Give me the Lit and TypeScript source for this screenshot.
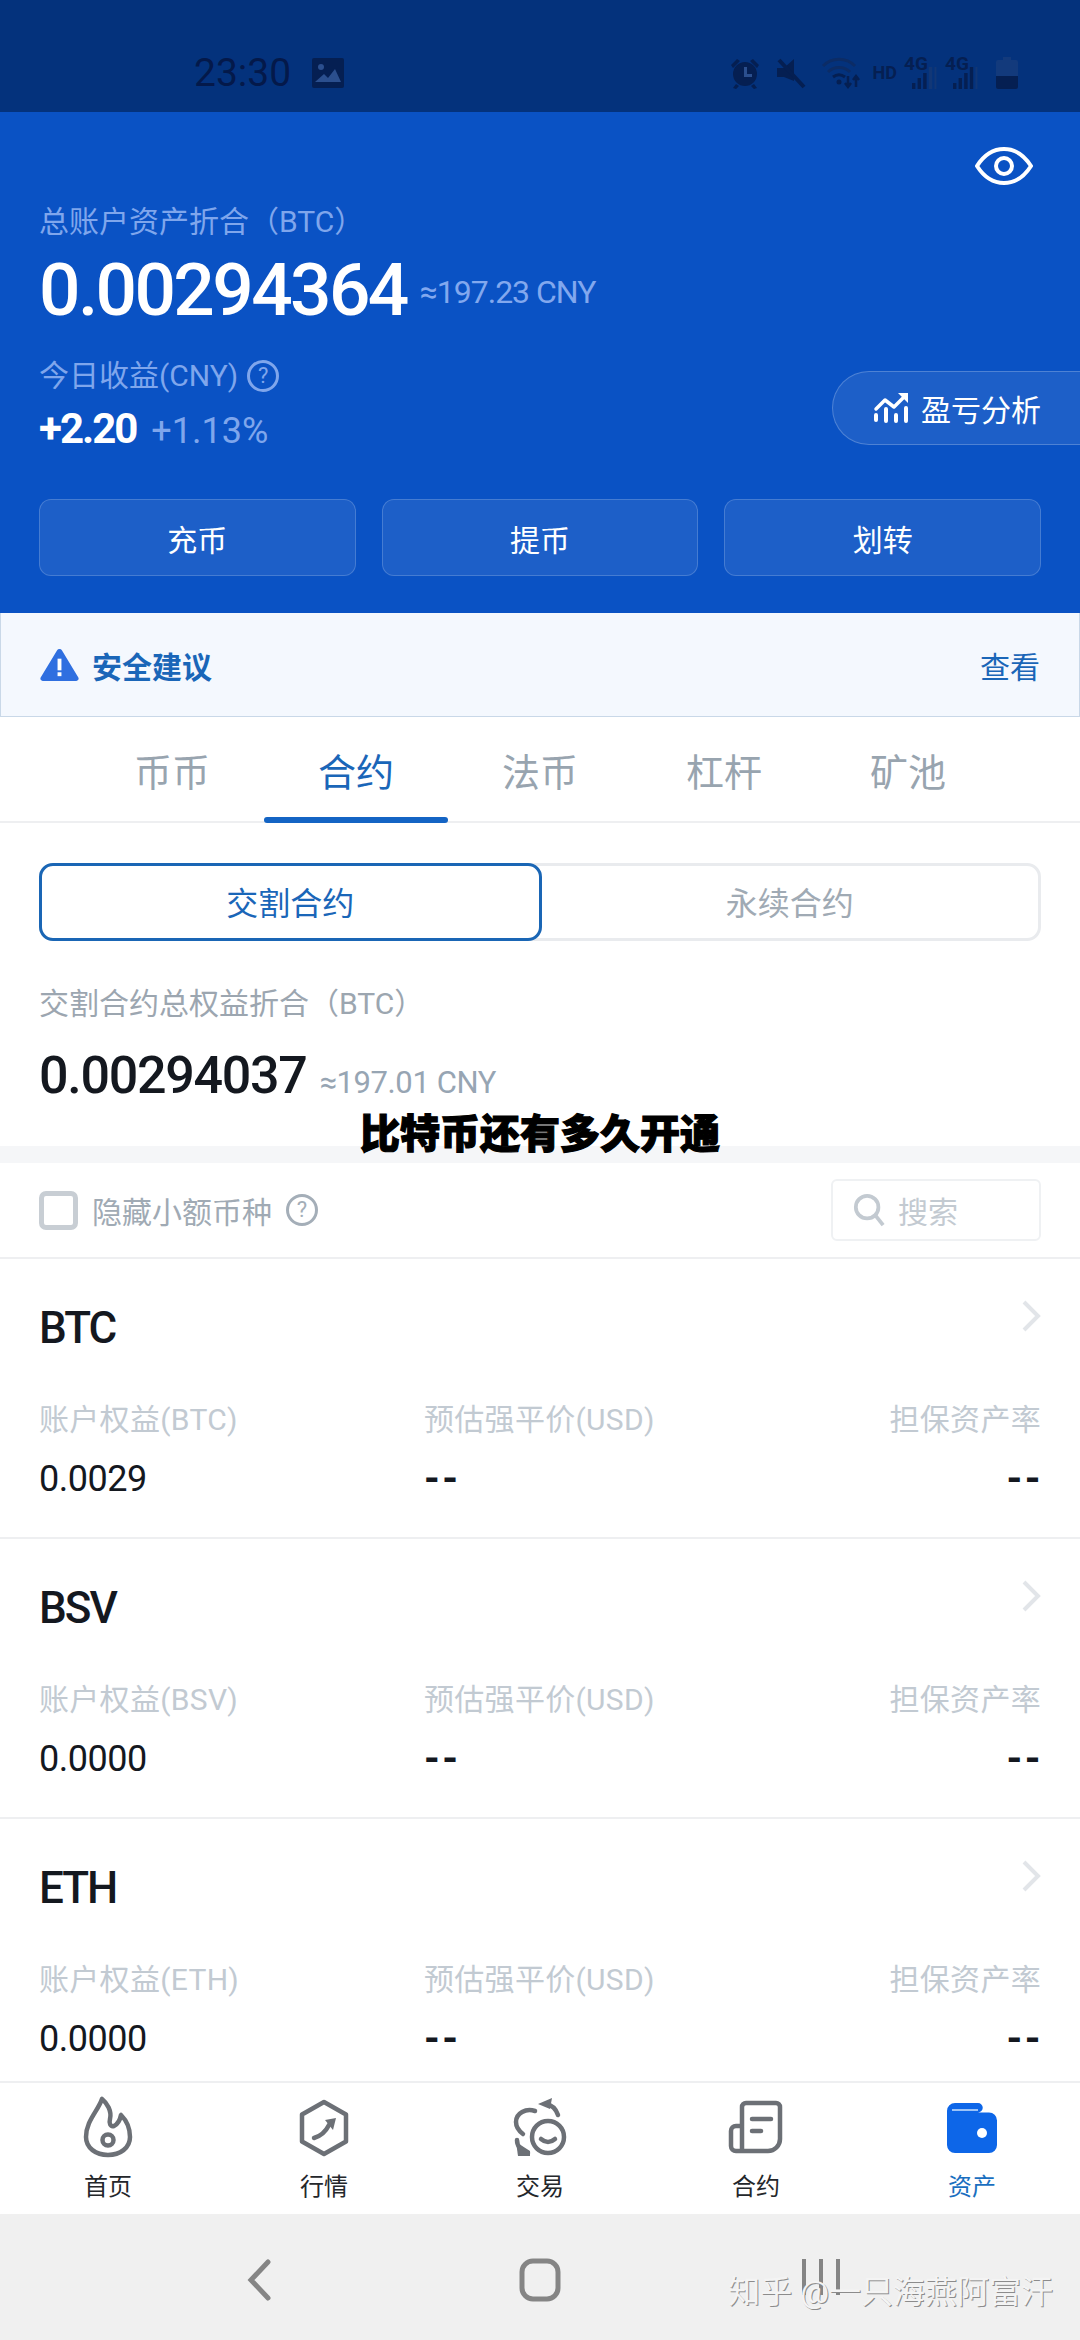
import { css, html, LitElement, svg } from "lit";
import { customElement } from "lit/decorators.js";

const TABS = ["币币", "合约", "法币", "杠杆", "矿池"];

const COINS = ["BTC", "BSV", "ETH"];
const COIN_VALUES: Record<string, string> = {
  BTC: "0.0029",
  BSV: "0.0000",
  ETH: "0.0000",
};

const NAV_ICONS = [
  svg`<path d="M26 6C22 18 10 28 10 44C10 55 20 62 32 62C44 62 54 55 54 44C54 34 50 27 45 22C44 27 42 31 38 33C34 34 33 30 34 26C36 18 31 10 26 6Z" stroke-linejoin="round" /><circle cx="32" cy="47" r="5.5" />`,
  svg`<path d="M32 9L54 21.5V48.5L32 61L10 48.5V21.5Z" stroke-linejoin="round" /><path d="M22 45C29 43 34 38 37 32" /><path d="M44 25L33 27L41 37Z" fill="#6c7076" stroke="none" />`,
  svg`<circle cx="40" cy="44" r="16" /><path d="M33 46Q40 52 47 46" /><path d="M27 18C18 15 8 20 8 29C8 34 11 38 15 41" /><path d="M38 11C44 12 48 16 50 22" /><path d="M30 11L44 5L42 16Z" fill="#6c7076" stroke="none" /><path d="M9 47C9 53 13 58 20 60" /><path d="M8 49L22 58L22 63L10 63Z" fill="#6c7076" stroke="none" />`,
  svg`<path d="M18 57V14a4 4 0 0 1 4-4H52a4 4 0 0 1 4 4V46a12 12 0 0 1-12 12H12a5 5 0 0 1-5-5V38a5 5 0 0 1 5-5h6" stroke-linejoin="round" /><path d="M28 26H47" /><path d="M28 38H37" />`,
];

@customElement("app-root")
export class AppRoot extends LitElement {
  private renderCoin(coin: string) {
    return html`
      <div class="coin">
        <div class="coin-head">
          <span class="coin-name">${coin}</span>
          <svg class="chev" viewBox="0 0 20 32" width="20" height="32">
            <path d="M3 2l14 14L3 30" />
          </svg>
        </div>
        <div class="coin-grid labels">
          <span>账户权益(${coin})</span>
          <span>预估强平价(USD)</span>
          <span class="end">担保资产率</span>
        </div>
        <div class="coin-grid values">
          <span>${COIN_VALUES[coin]}</span>
          <span class="dash">--</span>
          <span class="end dash">--</span>
        </div>
      </div>
    `;
  }

  private renderNet(strong: number) {
    const heights = [6, 11, 16, 22, 22];
    return html`
      <span class="net">
        <span class="net-label">4G</span>
        <svg viewBox="0 0 28 22" width="28" height="22">
          ${heights.map(
            (h, i) => svg`<rect x=${i * 5.6} y=${22 - h} width=${i === 4 ? 2 : 3.4} height=${h} fill=${i < strong ? "#051f52" : "#123776"} />`,
          )}
        </svg>
      </span>
    `;
  }

  protected render() {
    return html`
      <div class="status">
        <div class="status-left">
          <span class="time">23:30</span>
          <svg viewBox="0 0 32 30" width="32" height="30">
            <rect width="32" height="30" rx="2" fill="#051f52" />
            <circle cx="9" cy="9" r="3" fill="#2b4f8e" />
            <path d="M3 24l9-8 4 4 7-9 6 13z" fill="#2b4f8e" />
          </svg>
        </div>
        <div class="status-right">
          <svg viewBox="0 0 32 32" width="32" height="32" fill="#051f52">
            <circle cx="16" cy="17" r="12" />
            <path d="M2 8l6-6 3 2-7 7zM30 8l-6-6-3 2 7 7zM7 27l-3 4 3 1 3-3zM25 27l3 4-3 1-3-3z" />
            <path d="M15 10h3v7h5v3h-8z" fill="#2b4f8e" />
          </svg>
          <svg viewBox="0 0 30 32" width="30" height="32" fill="#051f52">
            <path d="M1 11h7l10-9v22L8 20H1z" />
            <path d="M3 3l25 27" stroke="#051f52" stroke-width="4" />
          </svg>
          <svg viewBox="0 0 40 34" width="40" height="34" fill="none" stroke="#0c2c66" stroke-width="3">
            <path d="M2 10c9-9 23-9 32 0M7 16c6-6 16-6 22 0" />
            <path d="M12 21c4-3 8-3 12 0" stroke="#051f52" />
            <circle cx="18" cy="26" r="2.5" fill="#051f52" stroke="none" />
            <path d="M27 20v11M24 27l3 4 3-4M35 31V20M32 24l3-4 3 4" stroke="#051f52" stroke-width="2.5" />
          </svg>
          <span class="hd">HD</span>
          ${this.renderNet(3)} ${this.renderNet(4)}
          <svg viewBox="0 0 22 32" width="22" height="32">
            <path d="M7 0h8v3h5a2 2 0 0 1 2 2v25a2 2 0 0 1-2 2H2a2 2 0 0 1-2-2V5a2 2 0 0 1 2-2h5z" fill="#133a7c" />
            <path d="M0 19h22v11a2 2 0 0 1-2 2H2a2 2 0 0 1-2-2z" fill="#051f52" />
          </svg>
        </div>
      </div>

      <div class="hero">
        <div class="eye-row">
          <svg viewBox="0 0 58 38" width="58" height="38" fill="none" stroke="#fff" stroke-width="4">
            <path d="M2 19C9 8 18 2 29 2s20 6 27 17c-7 11-16 17-27 17S9 30 2 19z" />
            <circle cx="29" cy="19" r="8" />
          </svg>
        </div>
        <div class="hero-label">总账户资产折合（BTC）</div>
        <div class="hero-total">
          <span class="hero-num">0.00294364</span>
          <span class="hero-cny">≈197.23 CNY</span>
        </div>
        <div class="hero-mid">
          <div>
            <div class="today">
              <span>今日收益(CNY)</span>
              <span class="qmark light">?</span>
            </div>
            <div class="profit">
              <span class="profit-num">+2.20</span>
              <span class="profit-pct">+1.13%</span>
            </div>
          </div>
          <div class="pnl">
            <svg viewBox="0 0 36 32" width="36" height="32" fill="none" stroke="#fff" stroke-width="3.5" stroke-linecap="round">
              <path d="M3 17L12 8L21 15L31 5" stroke-linejoin="round" />
              <path d="M25 1H35V11Z" fill="#fff" stroke="none" />
              <path d="M3 23V28M13 17V29M23 23V29M33 16V29" stroke-width="4" />
            </svg>
            <span>盈亏分析</span>
          </div>
        </div>
        <div class="actions">
          <div class="action">充币</div>
          <div class="action">提币</div>
          <div class="action">划转</div>
        </div>
      </div>

      <div class="banner">
        <div class="banner-left">
          <svg viewBox="0 0 40 34" width="39" height="33">
            <path d="M20 1a3 3 0 0 1 2.6 1.5l16.8 28A2.4 2.4 0 0 1 37.3 34H2.7a2.4 2.4 0 0 1-2.1-3.5l16.8-28A3 3 0 0 1 20 1z" fill="#2f6fe0" />
            <rect x="18" y="11" width="4" height="12" fill="#fff" />
            <rect x="18" y="25" width="4" height="4" fill="#fff" />
          </svg>
          <span>安全建议</span>
        </div>
        <span class="banner-link">查看</span>
      </div>

      <div class="tabs">
        ${TABS.map(
          (t, i) => html`<div class="tab ${i === 1 ? "active" : ""}">${t}</div>`,
        )}
      </div>

      <div class="contract">
        <div class="segment">
          <div class="seg active">交割合约</div>
          <div class="seg">永续合约</div>
        </div>
        <div class="contract-label">交割合约总权益折合（BTC）</div>
        <div class="contract-total">
          <span class="contract-num">0.00294037</span>
          <span class="contract-cny">≈197.01 CNY</span>
        </div>
      </div>

      <div class="gap"></div>

      <div class="filter">
        <div class="filter-left">
          <span class="check"></span>
          <span>隐藏小额币种</span>
          <span class="qmark grey">?</span>
        </div>
        <div class="search">
          <svg viewBox="0 0 34 36" width="32" height="34" fill="none" stroke="#c3cad1" stroke-width="4">
            <circle cx="15" cy="15" r="12" />
            <path d="M24 24l8 10" />
          </svg>
          <span>搜索</span>
        </div>
      </div>

      <div class="list">${COINS.map((c) => this.renderCoin(c))}</div>

      <div class="nav">
        ${["首页", "行情", "交易", "合约"].map(
          (label, i) => html`
            <div class="nav-item">
              <svg viewBox="0 0 64 68" width="64" height="68" fill="none" stroke="#6c7076" stroke-width="4.5" stroke-linecap="round">
                ${NAV_ICONS[i]}
              </svg>
              <span>${label}</span>
            </div>
          `,
        )}
        <div class="nav-item active">
          <svg viewBox="0 0 64 68" width="64" height="68">
            <path d="M15 10H38a4.5 4.5 0 0 1 0 9.5H49a8 8 0 0 1 8 8V52a8 8 0 0 1-8 8H15a8 8 0 0 1-8-8V18a8 8 0 0 1 8-8z" fill="#0d66e8" />
            <path d="M12 17H38" stroke="#9cc3f7" stroke-width="2" />
            <circle cx="42" cy="40" r="5" fill="#fff" />
          </svg>
          <span>资产</span>
        </div>
      </div>

      <div class="sysnav">
        <svg viewBox="0 0 26 42" width="26" height="42" fill="none" stroke="#858585" stroke-width="5" stroke-linecap="round">
          <path d="M22 3L5 21l17 18" />
        </svg>
        <svg viewBox="0 0 42 44" width="42" height="44" fill="none" stroke="#858585" stroke-width="5">
          <rect x="3" y="3" width="36" height="38" rx="11" />
        </svg>
        <svg class="recents" viewBox="0 0 40 36" width="40" height="36" fill="none" stroke="#858585" stroke-width="4">
          <path d="M3 0v36M20 0v36M37 0v36" />
        </svg>
      </div>

      <div class="caption">比特币还有多久开通</div>
      <div class="watermark">知乎 @一只海燕阿富汗</div>
    `;
  }

  static styles = css`
    :host {
      display: block;
      position: relative;
      width: 1080px;
      height: 2340px;
      overflow: hidden;
      background: #fff;
      font-family: "Roboto", "Noto Sans CJK SC", sans-serif;
    }

    .status {
      height: 112px;
      box-sizing: border-box;
      padding: 53px 62px 0 194px;
      background: #04327c;
      display: flex;
      justify-content: space-between;
      align-items: flex-start;
    }

    .status-left {
      display: flex;
      align-items: center;
      gap: 21px;
      height: 40px;
    }

    .time {
      font-size: 39px;
      line-height: 40px;
      font-weight: 400;
      color: #04194a;
    }

    .status-right {
      display: flex;
      align-items: center;
      gap: 15px;
      height: 40px;
    }

    .hd {
      margin-left: -3px;
      font-size: 18px;
      font-weight: 700;
      color: #051f52;
      line-height: 26px;
    }

    .net {
      position: relative;
      display: block;
      width: 36px;
      height: 32px;
      margin-left: -8px;
    }

    .net + .net {
      margin-left: -10px;
    }

    .net svg {
      position: absolute;
      right: 0;
      bottom: 0;
    }

    .net-label {
      position: absolute;
      left: 0;
      top: -3px;
      font-size: 19px;
      line-height: 20px;
      font-weight: 700;
      color: #051f52;
    }

    .hero {
      height: 501px;
      box-sizing: border-box;
      background: #0a52c4;
      padding: 35px 39px 0;
      color: #fff;
    }

    .eye-row {
      display: flex;
      justify-content: flex-end;
      height: 38px;
      margin-right: 8px;
    }

    .hero-label {
      margin-top: 17px;
      font-size: 30px;
      line-height: 40px;
      color: #7fa6ec;
    }

    .hero-total {
      display: flex;
      align-items: center;
      gap: 13px;
      margin-top: 10px;
      height: 76px;
    }

    .hero-num {
      font-size: 73px;
      line-height: 76px;
      font-weight: 500;
      letter-spacing: -2.6px;
    }

    .hero-cny {
      margin-top: 4px;
      font-size: 32px;
      letter-spacing: -1px;
      color: #82a8ee;
    }

    .hero-mid {
      display: flex;
      justify-content: space-between;
      align-items: center;
      margin: 28px -39px 0 0;
    }

    .today {
      display: flex;
      align-items: center;
      gap: 9px;
      font-size: 30px;
      line-height: 40px;
      color: #7fa6ec;
    }

    .qmark {
      width: 32px;
      height: 32px;
      box-sizing: border-box;
      border: 3px solid;
      border-radius: 50%;
      font-size: 22px;
      line-height: 26px;
      text-align: center;
    }

    .qmark.light {
      color: #7fa6ec;
    }

    .qmark.grey {
      color: #a4aeb8;
    }

    .profit {
      display: flex;
      align-items: baseline;
      gap: 15px;
      margin-top: 10px;
    }

    .profit-num {
      font-size: 42px;
      line-height: 46px;
      font-weight: 700;
      letter-spacing: -2px;
    }

    .profit-pct {
      font-size: 36px;
      color: #7fa6ec;
    }

    .pnl {
      width: 248px;
      height: 74px;
      box-sizing: border-box;
      margin-top: 8px;
      display: flex;
      align-items: center;
      gap: 12px;
      padding-left: 40px;
      border: 1px solid rgba(255, 255, 255, 0.22);
      border-right: 0;
      border-radius: 37px 0 0 37px;
      background: rgba(255, 255, 255, 0.08);
      font-size: 30px;
    }

    .actions {
      display: grid;
      grid-template-columns: repeat(3, 1fr);
      gap: 26px;
      margin-top: 47px;
    }

    .action {
      height: 77px;
      box-sizing: border-box;
      display: flex;
      align-items: center;
      justify-content: center;
      border: 1px solid rgba(255, 255, 255, 0.18);
      border-radius: 12px;
      background: rgba(255, 255, 255, 0.08);
      font-size: 30px;
    }

    .banner {
      height: 104px;
      box-sizing: border-box;
      display: flex;
      justify-content: space-between;
      align-items: center;
      padding: 0 39px;
      background: #f4f8fe;
      border: 1px solid #c9d8e8;
      border-top: 0;
    }

    .banner-left {
      display: flex;
      align-items: center;
      gap: 13px;
      font-size: 30px;
      font-weight: 700;
      color: #1a66b8;
    }

    .banner-link {
      font-size: 30px;
      color: #1a66b8;
    }

    .tabs {
      height: 106px;
      box-sizing: border-box;
      display: flex;
      padding: 0 80px;
      border-bottom: 2px solid #eeeff1;
    }

    .tab {
      position: relative;
      width: 184px;
      display: flex;
      align-items: center;
      justify-content: center;
      font-size: 38px;
      color: #98a4af;
    }

    .tab.active {
      color: #1a66b8;
    }

    .tab.active::after {
      content: "";
      position: absolute;
      left: 0;
      right: 0;
      bottom: -2px;
      height: 6px;
      border-radius: 3px;
      background: #1464c4;
    }

    .contract {
      height: 323px;
      box-sizing: border-box;
      padding: 40px 39px 0;
    }

    .segment {
      display: flex;
      height: 78px;
      box-sizing: border-box;
      border: 3px solid #e9ebee;
      border-radius: 14px;
    }

    .seg {
      flex: 1;
      display: flex;
      align-items: center;
      justify-content: center;
      font-size: 32px;
      padding-bottom: 2px;
      color: #a0aab4;
    }

    .seg.active {
      margin: -3px 0 -3px -3px;
      border: 3px solid #1a66b5;
      border-radius: 14px;
      color: #1a66b8;
    }

    .contract-label {
      margin-top: 43px;
      font-size: 30px;
      line-height: 40px;
      color: #9ca6b0;
    }

    .contract-total {
      display: flex;
      align-items: baseline;
      gap: 13px;
      margin-top: 22px;
    }

    .contract-num {
      font-size: 52px;
      line-height: 60px;
      font-weight: 500;
      letter-spacing: -1.3px;
      color: #14181f;
    }

    .contract-cny {
      font-size: 31px;
      letter-spacing: -0.4px;
      color: #97a5b3;
    }

    .gap {
      height: 17px;
      background: #f5f6f8;
    }

    .filter {
      height: 96px;
      box-sizing: border-box;
      display: flex;
      justify-content: space-between;
      align-items: center;
      padding: 0 39px;
      border-bottom: 2px solid #eeeff1;
    }

    .filter-left {
      display: flex;
      align-items: center;
      font-size: 30px;
      color: #a0aab4;
    }

    .check {
      width: 39px;
      height: 39px;
      box-sizing: border-box;
      margin-right: 14px;
      border: 5px solid #c8ced4;
      border-radius: 7px;
    }

    .filter-left .qmark {
      margin-left: 14px;
    }

    .search {
      width: 210px;
      height: 62px;
      box-sizing: border-box;
      display: flex;
      align-items: center;
      gap: 13px;
      padding-left: 20px;
      border: 2px solid #eff1f3;
      border-radius: 6px;
      font-size: 30px;
      color: #c3cad1;
    }

    .list {
      height: 822px;
      overflow: hidden;
    }

    .coin {
      height: 280px;
      box-sizing: border-box;
      padding: 0 39px;
      border-bottom: 2px solid #eeeff1;
    }

    .coin-head {
      position: relative;
      padding-top: 44px;
      line-height: 50px;
    }

    .coin-name {
      font-size: 44px;
      font-weight: 500;
      letter-spacing: -2px;
      color: #14181f;
    }

    .chev {
      position: absolute;
      right: 0;
      top: 41px;
      fill: none;
      stroke: #e2e5e9;
      stroke-width: 4;
    }

    .coin-grid {
      display: grid;
      grid-template-columns: 385px 1fr auto;
    }

    .labels {
      margin-top: 37px;
      font-size: 30px;
      line-height: 40px;
      letter-spacing: 0.3px;
      color: #c2cad2;
    }

    .values {
      margin-top: 19px;
      font-size: 36px;
      line-height: 40px;
      letter-spacing: -0.5px;
      color: #14181f;
    }

    .dash {
      font-size: 40px;
      font-weight: 700;
      letter-spacing: 2.5px;
    }

    .end {
      text-align: right;
    }

    .end.dash {
      margin-right: -2px;
    }

    .nav {
      height: 133px;
      box-sizing: border-box;
      display: grid;
      grid-template-columns: repeat(5, 1fr);
      border-top: 2px solid #eeeff1;
      background: #fff;
    }

    .nav-item {
      display: flex;
      flex-direction: column;
      align-items: center;
      padding-top: 10px;
      gap: 10px;
      font-size: 24px;
      line-height: 32px;
      color: #24272b;
    }

    .nav-item.active {
      color: #1a6fc0;
    }

    .sysnav {
      height: 126px;
      box-sizing: border-box;
      display: grid;
      grid-template-columns: repeat(3, 281px);
      justify-content: center;
      justify-items: center;
      align-items: center;
      padding-top: 6px;
      background: #f0f0f0;
    }

    .recents {
      margin-bottom: 6px;
    }

    .caption {
      position: absolute;
      left: 0;
      right: 0;
      top: 1111px;
      text-align: center;
      font-size: 40px;
      line-height: 48px;
      font-weight: 900;
      color: #000;
      -webkit-text-stroke: 1.2px #000;
    }

    .watermark {
      position: absolute;
      right: 27px;
      top: 2272px;
      font-size: 32px;
      line-height: 40px;
      color: #f4f4f4;
      text-shadow: 1px 1px 0 #8c8c8c;
    }
  `;
}

declare global {
  interface HTMLElementTagNameMap {
    "app-root": AppRoot;
  }
}
